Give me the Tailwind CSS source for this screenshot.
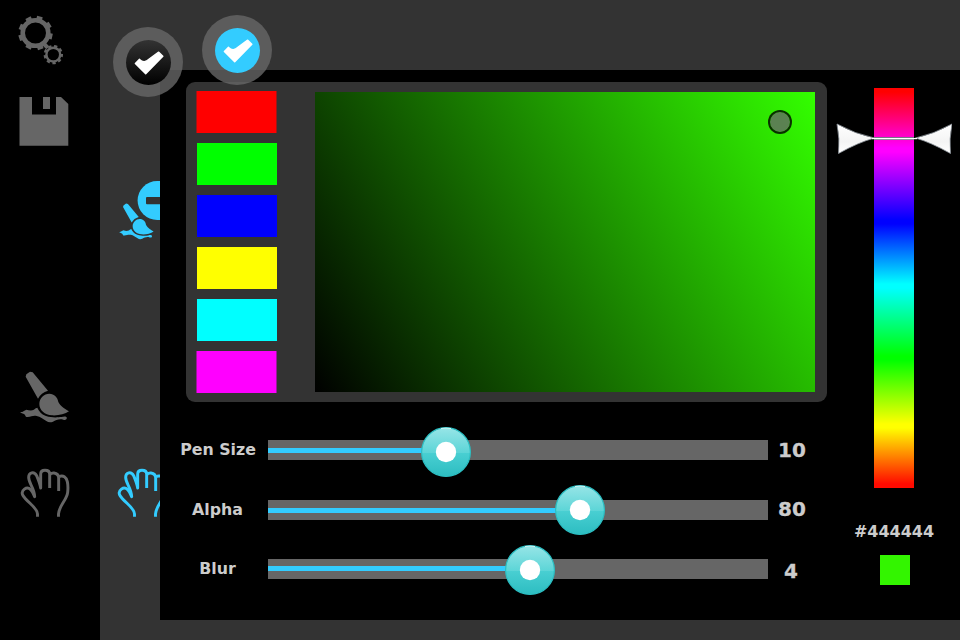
<!DOCTYPE html>
<html lang="en">
<head>
<meta charset="utf-8">
<title>Paint settings</title>
<script src="https://cdn.jsdelivr.net/npm/@tailwindcss/browser@4"></script>
</head>
<body class="bg-black">
<svg class="absolute size-0">
  <defs>
    <symbol id="brush" viewBox="0 0 180 170" overflow="visible">
      <path d="M77 50 L79 43 L90 35 L98 37 L144 92 Q123 98 114 116 Z"/>
      <path d="M148 101 C163 101 173 112 175 126 C181 139 196 147 207 154 C195 163 175 167 156 166 C134 165 118 150 118 132 C118 115 132 101 148 101 Z"/>
      <path d="M60 156 C68 157 72 152 79 149 Q88 152 97 151 C105 149 104 145 112 143 C117 153 123 162 138 168 C156 174 174 172 184 171 C191 169 198 168 200 172 C202 179 195 181 190 179 C178 175 168 180 159 185 Q148 190 139 183 C129 178 121 170 110 168 C99 166 94 170 83 171 C75 172 77 165 72 162 Q65 160 60 156 Z"/>
    </symbol>
    <symbol id="hand" viewBox="0 0 180 170" overflow="visible">
      <path fill="none" stroke="currentColor" stroke-width="8.8" stroke-linejoin="round" d="M112.500 111 V103 C112 82 80 68 68 46 C62 32 80 18 92 30 C98 37 101 43 104 51 C103 24 86 12 86 -7 C86 -22 102 -26 110 -12 C115 0 120 12 122 25 V-16 Q122 -28 135 -28 Q149 -28 149 -16 V25 M149 -14 Q153 -21 162 -20 Q176 -18 176 -5 V34 M176 -9 C190 -15 199 -8 202 6 Q205 20 203 38 C201 60 177 78 175.500 103 V111"/>
    </symbol>
    <linearGradient id="knob" x1="0" y1="0" x2="0" y2="1">
      <stop offset="0" stop-color="#97e5e7"/><stop offset=".52" stop-color="#5cd5d7"/>
      <stop offset=".52" stop-color="#49cfd2"/><stop offset="1" stop-color="#2dbdc1"/>
    </linearGradient>
    <linearGradient id="arrow" x1="0" y1="0" x2="0" y2="1">
      <stop offset="0" stop-color="#fff"/><stop offset=".6" stop-color="#f4f4f4"/><stop offset="1" stop-color="#fff"/>
    </linearGradient>
    <linearGradient id="dark" x1="0" y1="0" x2="0" y2="1">
      <stop stop-color="#333"/><stop offset="1" stop-color="#000"/>
    </linearGradient>
  </defs>
</svg>

<div class="relative flex h-[640px] w-[960px] overflow-hidden bg-[#333333] font-['DejaVu_Sans',sans-serif] font-bold text-[#cccccc]">

  <aside class="flex w-[100px] shrink-0 flex-col bg-black text-[#666666]">
    <svg class="h-20 w-[100px]" viewBox="0 0 100 80" fill="none" stroke="currentColor">
      <circle cx="35.5" cy="33" r="12.8" stroke-width="4.6"/>
      <g stroke-width="5.800" stroke-linejoin="round">
        <path d="M47.500 33 H52.600" transform="rotate(-75 35.500 33)"/>
        <path d="M47.500 33 H52.600" transform="rotate(-116 35.500 33)"/>
        <path d="M47.500 33 H52.600" transform="rotate(-157 35.500 33)"/>
        <path d="M47.500 33 H52.600" transform="rotate(162 35.500 33)"/>
        <path d="M47.500 33 H52.600" transform="rotate(116 35.500 33)"/>
        <path d="M47.500 33 H52.600" transform="rotate(72 35.500 33)"/>
        <path d="M47.500 33 H52.600" transform="rotate(12 35.500 33)"/>
        <path d="M47.500 33 H52.600" transform="rotate(-31 35.500 33)"/>
      </g>
      <path d="M43 43 L48 48" stroke-width="4"/>
      <circle cx="53.3" cy="54.6" r="8.6" fill="#000" stroke="none"/>
      <circle cx="53.3" cy="54.6" r="6.900" stroke-width="2.400"/>
      <circle cx="53.3" cy="54.6" r="8.600" stroke-width="2.200" stroke-dasharray="3.300 2.704" stroke-dashoffset="1"/>
    </svg>
    <svg class="h-20 w-[100px]" viewBox="0 80 100 80" fill="currentColor">
      <path d="M19.500 97 H32 V114.500 H56 V97 H61 L68.300 104 V145.700 H19.500 Z M43 97 H50 V109 H43 Z"/>
    </svg>
    <svg class="mt-[200px] h-20 w-[100px]" viewBox="0 360 100 80" fill="currentColor">
      <use href="#brush" x="0" y="360" width="60" height="56.667"/>
    </svg>
    <svg class="h-[90px] w-[100px]" viewBox="0 440 100 90">
      <use href="#hand" x="0" y="479.667" width="60" height="56.667"/>
    </svg>
  </aside>

  <div class="flex w-[60px] shrink-0 flex-col bg-[#333333] pt-[170px] text-[#33ccff]">
    <svg class="h-20 w-[60px]" viewBox="100 170 60 80" fill="currentColor">
      <circle cx="157.2" cy="200.5" r="19.6"/>
      <rect x="146" y="197" width="24" height="7.3" rx="1" fill="#333333"/>
      <use href="#brush" x="104.87" y="195.3" width="42.4" height="40"/>
    </svg>
    <svg class="mt-[190px] h-[90px] w-[60px]" viewBox="100 440 60 90">
      <use href="#hand" x="97" y="479.667" width="60" height="56.667"/>
    </svg>
  </div>

  <main class="flex flex-1 flex-col pt-[70px] pb-5">
    <div class="flex h-[550px] bg-black">
      <section class="flex w-[667px] flex-col pt-3">
        <div class="ml-[26px] flex h-80 gap-[38px] rounded-[9px] bg-[#333333] pl-[11px]">
          <div class="flex w-20 flex-col gap-[10px] pt-[9px]">
            <div class="h-[42px] -translate-x-[0.5px] bg-[#ff0000]"></div>
            <div class="h-[42px] bg-[#00ff00]"></div>
            <div class="h-[42px] bg-[#0000ff]"></div>
            <div class="h-[42px] bg-[#ffff00]"></div>
            <div class="h-[42px] bg-[#00ffff]"></div>
            <div class="h-[42px] -translate-x-[0.5px] bg-[#ff00ff]"></div>
          </div>
          <div class="relative mt-[10px] h-[300px] w-[500px] bg-[linear-gradient(59deg,#000000,#33ff00)]">
            <div class="absolute left-[453px] top-[18px] size-6 rounded-full border-2 border-black/80 bg-[#666666]/80 bg-clip-padding"></div>
          </div>
        </div>

        <div class="mt-[38px] flex h-5 items-center">
          <div class="-mt-px w-[108px] pl-2 text-center text-[15.8px] leading-5 whitespace-nowrap">Pen Size</div>
          <div class="relative h-5 w-[500px] bg-[#666666] pt-2">
            <div class="h-[5px] w-[170px] bg-[#33ccff]"></div>
            <svg class="absolute -top-[13px] left-[153px] size-[50px]" viewBox="0 0 50 50"><circle cx="25" cy="25" r="24.4" fill="url(#knob)" stroke="#2bbfc3" stroke-width="1.2"/><path d="M20 1.5 Q25 .8 30 1.5" stroke="#d5f5f5" fill="none"/><circle cx="25" cy="25" r="10.2" fill="#fff"/></svg>
          </div>
          <div class="w-12 text-center text-xl leading-5 [-webkit-text-stroke:0.3px_#cccccc]">10</div>
        </div>
        <div class="mt-10 flex h-5 items-center">
          <div class="-mt-px w-[108px] pl-[7px] text-center text-[15.8px] leading-5">Alpha</div>
          <div class="relative h-5 w-[500px] bg-[#666666] pt-2">
            <div class="h-[5px] w-[300px] bg-[#33ccff]"></div>
            <svg class="absolute -top-[15px] left-[287px] size-[50px]" viewBox="0 0 50 50"><circle cx="25" cy="25" r="24.4" fill="url(#knob)" stroke="#2bbfc3" stroke-width="1.2"/><path d="M20 1.5 Q25 .8 30 1.5" stroke="#d5f5f5" fill="none"/><circle cx="25" cy="25" r="10.2" fill="#fff"/></svg>
          </div>
          <div class="-mt-0.5 w-12 text-center text-xl leading-5 [-webkit-text-stroke:0.3px_#cccccc]">80</div>
        </div>
        <div class="mt-[39px] flex h-5 items-center">
          <div class="-mt-px w-[108px] pl-[7px] text-center text-[15.8px] leading-5">Blur</div>
          <div class="relative h-5 w-[500px] bg-[#666666] pt-[7px]">
            <div class="h-[5px] w-[250px] bg-[#33ccff]"></div>
            <svg class="absolute -top-[14px] left-[237px] size-[50px]" viewBox="0 0 50 50"><circle cx="25" cy="25" r="24.4" fill="url(#knob)" stroke="#2bbfc3" stroke-width="1.2"/><path d="M20 1.5 Q25 .8 30 1.5" stroke="#d5f5f5" fill="none"/><circle cx="25" cy="25" r="10.2" fill="#fff"/></svg>
          </div>
          <div class="mt-[3px] w-12 pr-0.5 text-center text-xl leading-5 [-webkit-text-stroke:0.3px_#cccccc]">4</div>
        </div>
      </section>

      <section class="flex flex-1 flex-col items-center pt-[18px] pl-px">
        <div class="relative h-[400px] w-10 bg-[linear-gradient(to_bottom,#ff0000_0%,#ff0000_1%,#ff00ff_15%,#ff00ff_16%,#0000ff_33%,#0000ff_34%,#00ffff_49%,#00ffff_50%,#00ff00_67%,#00ff00_68%,#ffff00_84%,#ffff00_85%,#ff0a00_99%)]">
          <svg class="absolute -left-[38px] top-[34px] h-8 w-[116px]" viewBox="0 0 116 32">
            <rect x="38" y="15" width="40" height="3" fill="#778"/>
            <g fill="url(#arrow)" stroke="#8a9299" stroke-width=".8">
              <path d="M1 2 Q19 12 38.5 16 Q22 20.500 2.5 31.500 Q4 17 1 2 Z"/>
              <path d="M116 2 Q98 12 79.5 16 Q95 20.500 114.5 31.500 Q113 17 116 2 Z"/>
            </g>
            <rect x="36" y="16" width="45" height="1.2" fill="#fff"/>
          </svg>
        </div>
        <div class="mt-[34px] text-base leading-5">#444444</div>
        <div class="mt-[13px] ml-0.5 size-[30px] bg-[#33f500]"></div>
      </section>
    </div>
  </main>

  <!-- Floating confirm buttons -->
  <svg class="absolute left-[113px] top-[27px] size-[70px]" viewBox="-35 -35 70 70">
    <circle r="35" fill="#666666" fill-opacity=".8"/>
    <circle cx=".5" cy=".5" r="22.5" fill="url(#dark)"/>
    <path d="M-12.6 1.5 L-8.500 -2.600 Q-5 1 -1.500 -1 L10.700 -9.800 L14.800 -5.700 L-2.300 11.600 Z" fill="#fff" stroke="#fff" stroke-width="1.500" stroke-linejoin="round"/>
  </svg>
  <svg class="absolute left-[202px] top-[15px] size-[70px]" viewBox="-35 -35 70 70">
    <circle r="35" fill="#666666" fill-opacity=".8"/>
    <circle cx=".5" cy=".5" r="22.5" fill="#33ccff"/>
    <path d="M-12.6 1.5 L-8.500 -2.600 Q-5 1 -1.500 -1 L10.700 -9.800 L14.800 -5.700 L-2.300 11.600 Z" fill="#fff" stroke="#fff" stroke-width="1.500" stroke-linejoin="round"/>
  </svg>
</div>
</body>
</html>
